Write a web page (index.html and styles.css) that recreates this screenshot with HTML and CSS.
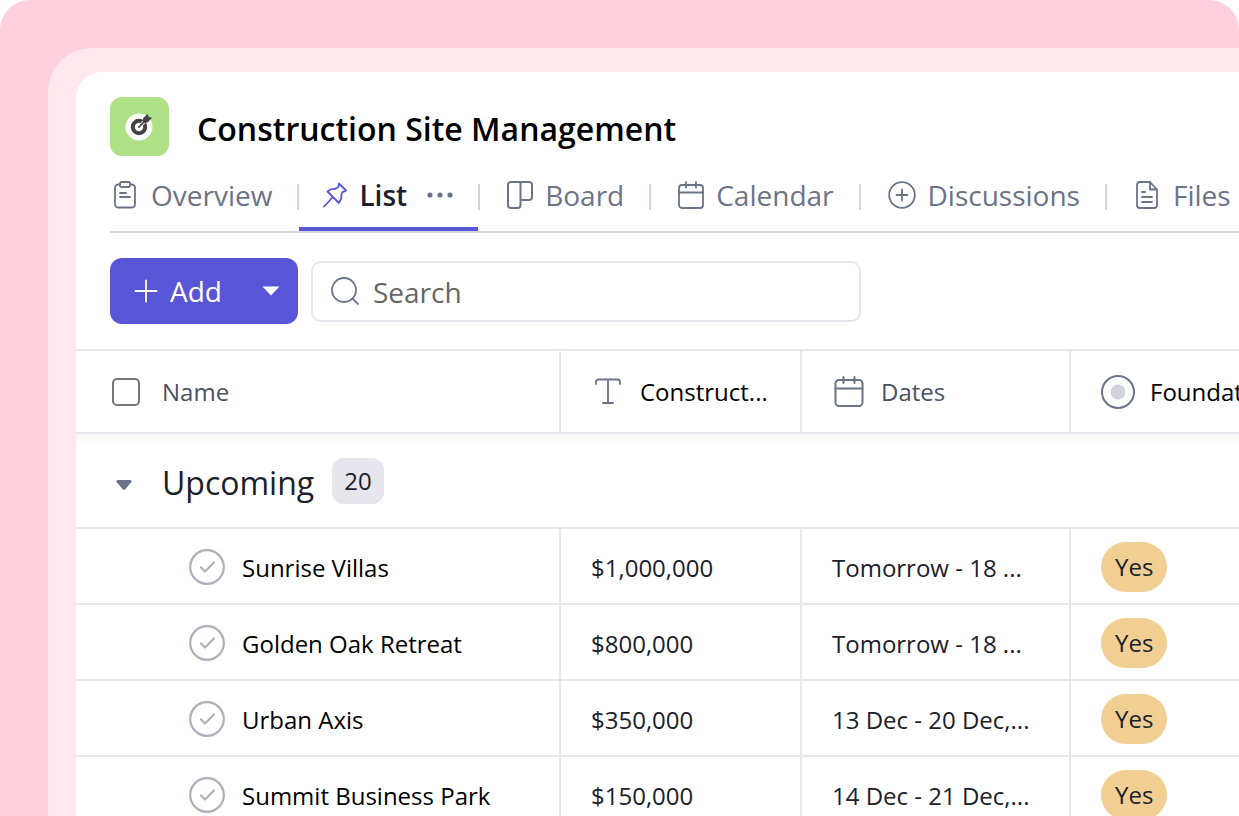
FILE: index.html
```html
<!DOCTYPE html>
<html lang="en">
<head>
  <meta charset="UTF-8">
  <title>Construction Site Management</title>
  <meta name="viewport" content="width=device-width, initial-scale=1.0">
  <link rel="stylesheet" href="styles.css">
</head>
<body>

<div class="stage">
  <div class="frame">
    <main class="panel">

      <header class="header">
        <div class="title-row">
          <div class="logo">
            <svg width="30" height="30" viewBox="0 0 30 30" fill="none">
              <circle cx="14" cy="15" r="13.5" fill="#fff"/>
              <circle cx="14" cy="15" r="6.2" stroke="#434246" stroke-width="4"/>
              <path d="M14 15L19 10" stroke="#fff" stroke-width="3.4"/>
              <path d="M13.4 15.6L21 8" stroke="#434246" stroke-width="1.6"/>
              <path d="M17.800 10.800L18.200 6L22.600 2L23.600 4.800L27 5.800L22.600 10.600Z" fill="#434246"/>
            </svg>
          </div>
          <h1>Construction Site Management</h1>
        </div>

        <nav class="tabs">
          <a class="tab" href="#">
            <svg width="22" height="28" viewBox="0 0 22 28" fill="none" stroke="currentColor" stroke-width="1.8" stroke-linecap="round">
              <path d="M6 3.5H4A3 3 0 0 0 1 6.500V23.500A3 3 0 0 0 4 26.500H18A3 3 0 0 0 21 23.500V6.500A3 3 0 0 0 18 3.500H16"/>
              <rect x="6" y="1" width="10" height="5" rx="1.500"/>
              <path d="M6 12H12M6 16H16"/>
            </svg>
            Overview
          </a>
          <span class="separator"></span>
          <div class="tab active">
            <a href="#">
              <svg width="24" height="26" viewBox="0 0 24 26" fill="none" stroke="#5856d6" stroke-width="1.8" stroke-linejoin="round" stroke-linecap="round">
                <path d="M16 1.500L23 8.500C21.500 9.500 20.500 9.500 19.500 10L18.300 13C19 17 17.500 19 15.800 21L4.500 9.500C6.500 7.500 9 6.500 12 7L15.500 4.800C16 3.500 15.500 2.500 16 1.500Z"/>
                <path d="M9.500 15.500L1 24.500"/>
              </svg>
              List
            </a>
            <button type="button" class="more" aria-label="List options">
              <svg width="26" height="6" viewBox="0 0 26 6" fill="#6b7389">
                <circle cx="3" cy="3" r="2.600"/><circle cx="13" cy="3" r="2.600"/><circle cx="23" cy="3" r="2.600"/>
              </svg>
            </button>
          </div>
          <span class="separator"></span>
          <a class="tab" href="#">
            <svg width="26" height="28" viewBox="0 0 26 28" fill="none" stroke="currentColor" stroke-width="2">
              <path d="M4 1H22A3 3 0 0 1 25 4V16A3 3 0 0 1 22 19H13.500V24A3 3 0 0 1 10.500 27H4A3 3 0 0 1 1 24V4A3 3 0 0 1 4 1ZM13.500 1V19"/>
            </svg>
            Board
          </a>
          <span class="separator"></span>
          <a class="tab" href="#">
            <svg width="26" height="28" viewBox="0 0 26 28" fill="none" stroke="currentColor" stroke-width="1.800" stroke-linecap="round">
              <rect x="1" y="4" width="24" height="23" rx="3"/>
              <path d="M1 11.500H25M8 1V6.500M18 1V6.500"/>
            </svg>
            Calendar
          </a>
          <span class="separator"></span>
          <a class="tab" href="#">
            <svg width="28" height="28" viewBox="0 0 28 28" fill="none" stroke="currentColor" stroke-width="1.800" stroke-linecap="round">
              <circle cx="14" cy="14" r="12.800"/>
              <path d="M14 8.500V19.500M8.500 14H19.500"/>
            </svg>
            Discussions
          </a>
          <span class="separator"></span>
          <a class="tab" href="#">
            <svg width="22" height="28" viewBox="0 0 22 28" fill="none" stroke="currentColor" stroke-width="1.800" stroke-linejoin="round" stroke-linecap="round">
              <path d="M14 1H4A3 3 0 0 0 1 4V24A3 3 0 0 0 4 27H18A3 3 0 0 0 21 24V8.500L14 1V8.500H21M6 11H9M6 16H16M6 21H16"/>
            </svg>
            Files
          </a>
        </nav>
      </header>

      <div class="toolbar">
        <div class="add-group">
          <button type="button" class="add-btn">
            <svg width="24" height="24" viewBox="0 0 24 24" stroke="#fff" stroke-width="1.800" stroke-linecap="round">
              <path d="M12 1.500V22.500M1.500 12H22.500"/>
            </svg>
            Add
          </button>
          <button type="button" class="add-menu" aria-label="More add options">
            <svg width="18" height="10" viewBox="0 0 18 10" fill="#fff"><path d="M0.500 0.500H17.500L9 9.500Z"/></svg>
          </button>
        </div>
        <label class="search">
          <svg width="28" height="28" viewBox="0 0 28 28" fill="none" stroke="#6b7389" stroke-width="1.800">
            <circle cx="13" cy="13" r="12"/>
            <path d="M21 21L27.500 27.500"/>
          </svg>
          <input type="search" placeholder="Search" aria-label="Search">
        </label>
      </div>

      <table class="list">
        <colgroup>
          <col class="col-name">
          <col class="col-cost">
          <col class="col-dates">
          <col>
        </colgroup>
        <thead>
          <tr>
            <th>
              <label class="cell name-head"><input type="checkbox" class="checkbox">Name</label>
            </th>
            <th class="custom">
              <div class="cell">
                <svg width="34" height="34" viewBox="0 0 34 34" fill="none" stroke="#6b7389" stroke-width="1.800" stroke-linecap="round" stroke-linejoin="round">
                  <path d="M5 9V7A2.500 2.500 0 0 1 7.500 4.500H26.500A2.500 2.500 0 0 1 29 7V9M17 4.500V28M12 28H22"/>
                </svg>
                Construct...
              </div>
            </th>
            <th>
              <div class="cell">
                <svg width="34" height="34" viewBox="0 0 34 34" fill="none" stroke="#6b7389" stroke-width="2" stroke-linecap="round">
                  <rect x="3.500" y="5" width="27" height="26" rx="3.500"/>
                  <path d="M3.500 13.500H30.500M11.500 2V8M22.500 2V8"/>
                </svg>
                Dates
              </div>
            </th>
            <th class="custom">
              <div class="cell">
                <svg width="34" height="34" viewBox="0 0 34 34" fill="none">
                  <circle cx="17" cy="17" r="16" stroke="#6b7389" stroke-width="2"/>
                  <circle cx="17" cy="17" r="7.500" fill="#cfd3da"/>
                </svg>
                Foundation
              </div>
            </th>
          </tr>
        </thead>
        <tbody>
          <tr class="group">
            <td colspan="4">
              <div class="group-title">
                <button type="button" class="collapse" aria-label="Collapse Upcoming">
                  <svg width="16" height="12" viewBox="0 0 16 12" fill="#6b7389"><path d="M1.800 1H14.200C15.800 1 16 2.500 15 3.600L9.300 10.300C8.500 11.200 7.500 11.200 6.700 10.300L1 3.600C0 2.500 0.200 1 1.800 1Z"/></svg>
                </button>
                <h2>Upcoming</h2>
                <span class="count">20</span>
              </div>
            </td>
          </tr>
          <tr>
            <td>
              <div class="cell task">
                <button type="button" class="done" aria-label="Complete Sunrise Villas">
                  <svg width="36" height="36" viewBox="0 0 36 36" fill="none" stroke="#acb0bb" stroke-width="2.200" stroke-linecap="round" stroke-linejoin="round"><circle cx="18" cy="18" r="16.800"/><path d="M12 18.500L16 22.500L25 13.500"/></svg>
                </button>
                Sunrise Villas
              </div>
            </td>
            <td><div class="cell">$1,000,000</div></td>
            <td><div class="cell">Tomorrow - 18 ...</div></td>
            <td><div class="cell"><span class="pill">Yes</span></div></td>
          </tr>
          <tr>
            <td>
              <div class="cell task">
                <button type="button" class="done" aria-label="Complete Golden Oak Retreat">
                  <svg width="36" height="36" viewBox="0 0 36 36" fill="none" stroke="#acb0bb" stroke-width="2.200" stroke-linecap="round" stroke-linejoin="round"><circle cx="18" cy="18" r="16.800"/><path d="M12 18.500L16 22.500L25 13.500"/></svg>
                </button>
                Golden Oak Retreat
              </div>
            </td>
            <td><div class="cell">$800,000</div></td>
            <td><div class="cell">Tomorrow - 18 ...</div></td>
            <td><div class="cell"><span class="pill">Yes</span></div></td>
          </tr>
          <tr>
            <td>
              <div class="cell task">
                <button type="button" class="done" aria-label="Complete Urban Axis">
                  <svg width="36" height="36" viewBox="0 0 36 36" fill="none" stroke="#acb0bb" stroke-width="2.200" stroke-linecap="round" stroke-linejoin="round"><circle cx="18" cy="18" r="16.800"/><path d="M12 18.500L16 22.500L25 13.500"/></svg>
                </button>
                Urban Axis
              </div>
            </td>
            <td><div class="cell">$350,000</div></td>
            <td><div class="cell">13 Dec - 20 Dec,...</div></td>
            <td><div class="cell"><span class="pill">Yes</span></div></td>
          </tr>
          <tr>
            <td>
              <div class="cell task">
                <button type="button" class="done" aria-label="Complete Summit Business Park">
                  <svg width="36" height="36" viewBox="0 0 36 36" fill="none" stroke="#acb0bb" stroke-width="2.200" stroke-linecap="round" stroke-linejoin="round"><circle cx="18" cy="18" r="16.800"/><path d="M12 18.500L16 22.500L25 13.500"/></svg>
                </button>
                Summit Business Park
              </div>
            </td>
            <td><div class="cell">$150,000</div></td>
            <td><div class="cell">14 Dec - 21 Dec,...</div></td>
            <td><div class="cell"><span class="pill">Yes</span></div></td>
          </tr>
        </tbody>
      </table>

    </main>
  </div>
</div>

</body>
</html>
```
FILE: styles.css
```css
* {
  box-sizing: border-box;
  font-family: "Segoe UI", "Open Sans", "Noto Sans", sans-serif;
}

body {
  margin: 0;
  background: #fff;
  color: #1a202c;
  font-size: 24px;
}

h1, h2 {
  margin: 0;
}

a {
  color: inherit;
  text-decoration: none;
}

button {
  padding: 0;
  border: none;
  background: none;
  color: inherit;
  font-size: inherit;
  cursor: pointer;
}

svg {
  display: block;
  flex: none;
}

/* pink backdrop */
.stage {
  height: 100vh;
  padding: 48px 0 0 48px;
  background: #ffd0dd;
  border-radius: 30px 30px 0 0;
  overflow: hidden;
}

.frame {
  height: 100%;
  padding: 24px 0 0 28px;
  background: #ffe7ee;
  border-radius: 44px 0 0 0;
}

.panel {
  height: 100%;
  background: #fff;
  border-radius: 26px 0 0 0;
  overflow: hidden;
}

/* header */
.header {
  padding: 25px 0 0 34px;
}

.title-row {
  display: flex;
  align-items: center;
  gap: 28px;
}

.logo {
  display: flex;
  align-items: center;
  justify-content: center;
  width: 59px;
  height: 59px;
  background: #aee085;
  border-radius: 12px;
}

h1 {
  padding-top: 4px;
  color: #000;
  font-size: 32px;
  font-weight: 600;
  white-space: nowrap;
}

.tabs {
  display: flex;
  align-items: center;
  height: 71px;
  margin-top: 6px;
  border-bottom: 2px solid #d3d5df;
  color: #6b7389;
  font-size: 28px;
  white-space: nowrap;
}

.tab,
.tab a {
  display: flex;
  align-items: center;
  gap: 12px;
}

.tab {
  align-self: stretch;
  padding: 0 25px 4px 27px;
}

.tab:first-child {
  padding-left: 4px;
  gap: 15px;
}

.tab:last-child {
  padding-left: 29px;
  gap: 15px;
}

.tab.active {
  padding: 0 25px 0 24px;
  gap: 20px;
  border-bottom: 4px solid #5856d6;
}

.tab.active a {
  color: #1a202c;
  font-weight: 600;
}

.separator {
  flex: none;
  width: 2px;
  height: 26px;
  background: #d0d5dd;
}

/* toolbar */
.toolbar {
  display: flex;
  align-items: center;
  gap: 13px;
  padding: 25px 34px;
}

.add-group {
  display: flex;
  height: 66px;
  padding: 0 18px 0 24px;
  gap: 40px;
  background: #5856d6;
  border-radius: 12px;
  color: #fff;
  font-size: 28px;
}

.add-btn {
  display: flex;
  align-items: center;
  gap: 12px;
}

.search {
  display: flex;
  flex: 0 1 550px;
  align-items: center;
  gap: 14px;
  height: 61px;
  padding: 0 18px;
  border: 2px solid #e6e6ed;
  border-radius: 10px;
}

.search input {
  flex: 1;
  min-width: 0;
  padding: 2px 0 0;
  border: none;
  outline: none;
  background: none;
  color: #1a202c;
  font-size: 28px;
}

.search input::placeholder {
  color: #666;
}

/* list */
.list {
  width: 100%;
  table-layout: fixed;
  border-collapse: separate;
  border-spacing: 0;
  border-top: 2px solid #e6e6ed;
}

.col-name {
  width: 485px;
}

.col-cost {
  width: 241px;
}

.col-dates {
  width: 269px;
}

th,
td {
  height: 76px;
  padding: 0;
  border-bottom: 2px solid #e6e6ed;
  border-right: 2px solid #e6e6ed;
  font-weight: 400;
  text-align: left;
}

td {
  padding-top: 2px;
}

th:last-child,
td:last-child {
  border-right: none;
}

th {
  height: 83px;
  color: #4a5162;
}

th.custom {
  color: #000;
}

.cell {
  display: flex;
  align-items: center;
  gap: 15px;
  padding-left: 30px;
  overflow: hidden;
  white-space: nowrap;
}

.name-head {
  gap: 22px;
  padding-left: 36px;
}

.checkbox {
  appearance: none;
  width: 28px;
  height: 28px;
  margin: 0;
  border: 2px solid #767676;
  border-radius: 5px;
}

.group td {
  height: 95px;
  padding: 0;
  background: linear-gradient(#f7f7f8, #fff 12px);
}

.group-title {
  display: flex;
  align-items: center;
  padding-left: 40px;
}

.collapse {
  padding-top: 8px;
}

h2 {
  margin: 0 18px 0 30px;
  padding-top: 3px;
  font-size: 32px;
  font-weight: 400;
}

.count {
  padding: 0 12px;
  background: #e6e6ec;
  border-radius: 12px;
  line-height: 46px;
}

.task {
  gap: 17px;
  padding-left: 113px;
  color: #000;
}

.pill {
  padding: 0 14px;
  background: #f1ce91;
  border-radius: 25px;
  line-height: 50px;
}
```
